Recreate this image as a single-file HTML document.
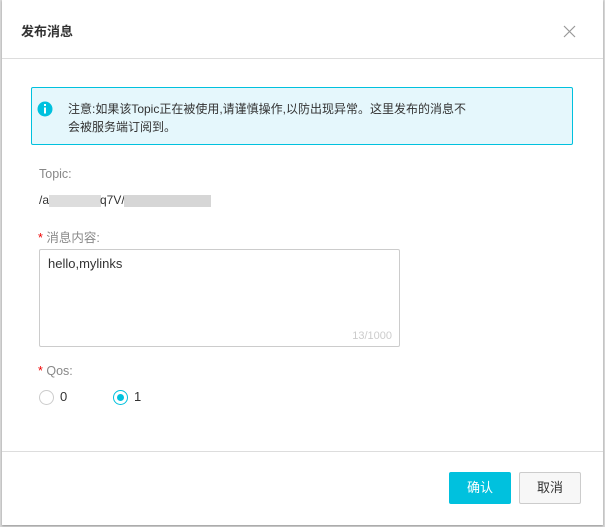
<!DOCTYPE html>
<html><head><meta charset="utf-8"><style>
*{margin:0;padding:0;box-sizing:border-box}
body{width:605px;height:527px;background:#d9d9d9;font-family:"Liberation Sans","Noto Sans CJK SC",sans-serif;position:relative;overflow:hidden;font-size:12px;color:#333}
.dlg{position:absolute;left:2px;top:0;width:601px;height:525px;background:#fff;box-shadow:0 1px 2px rgba(0,0,0,.3)}
.abs{position:absolute}
</style></head><body>
<div class="dlg">
<div class="abs" style="left:19px;top:21px;font-size:13px;font-weight:bold;color:#333">发布消息</div>
<svg class="abs" style="left:561px;top:25px" width="13" height="13"><path d="M1 1L12 12M12 1L1 12" stroke="#999" stroke-width="1.2"/></svg>
<div class="abs" style="left:0;top:58px;width:601px;height:1px;background:#ddd"></div>
<div class="abs" style="left:29px;top:87px;width:542px;height:58px;background:#e5f7fc;border:1px solid #00c1de;border-radius:2px"></div>
<svg class="abs" style="left:35px;top:101px" width="16" height="16"><circle cx="8" cy="8" r="7.5" fill="#00c1de"/><rect x="7" y="3" width="2" height="2" fill="#fff"/><rect x="7" y="6.5" width="2" height="6" fill="#fff"/></svg>
<div class="abs" style="left:66px;top:100px;width:500px;line-height:18px;font-size:12px;color:#333">注意:如果该Topic正在被使用,请谨慎操作,以防出现异常。这里发布的消息不<br>会被服务端订阅到。</div>
<div class="abs" style="left:37px;top:167px;color:#888;font-size:12.5px">Topic:</div>
<div class="abs" style="left:37px;top:193px;color:#333">/a</div>
<div class="abs" style="left:47px;top:195px;width:52px;height:12px;background:#ddd"></div>
<div class="abs" style="left:98px;top:193px;color:#333">q7V/</div>
<div class="abs" style="left:122px;top:195px;width:87px;height:12px;background:#d6d6d6"></div>
<div class="abs" style="left:36px;top:227px;color:#888;font-size:12.5px"><span style="color:#e00">*</span> 消息内容:</div>
<div class="abs" style="left:37px;top:249px;width:361px;height:98px;border:1px solid #ccc;border-radius:2px"></div>
<div class="abs" style="left:46px;top:256px;color:#333;font-size:13px">hello,mylinks</div>
<div class="abs" style="left:298px;top:330px;width:92px;text-align:right;font-size:11px;color:#ccc">13/1000</div>
<div class="abs" style="left:36px;top:364px;color:#888;font-size:12.5px"><span style="color:#e00">*</span> Qos:</div>
<div class="abs" style="left:37px;top:390px;width:15px;height:15px;border:1px solid #ccc;border-radius:50%"></div>
<div class="abs" style="left:58px;top:389px;font-size:13px">0</div>
<div class="abs" style="left:111px;top:390px;width:15px;height:15px;border:1px solid #00c1de;border-radius:50%"><div style="margin:3px;width:7px;height:7px;border-radius:50%;background:#00c1de"></div></div>
<div class="abs" style="left:132px;top:389px;font-size:13px">1</div>
<div class="abs" style="left:0;top:451px;width:601px;height:1px;background:#ddd"></div>
<div class="abs" style="left:447px;top:472px;width:62px;height:32px;background:#00c1de;color:#fff;text-align:center;line-height:32px;border-radius:2px;font-size:13px">确认</div>
<div class="abs" style="left:517px;top:472px;width:62px;height:32px;background:#f7f7f7;border:1px solid #ccc;color:#333;text-align:center;line-height:30px;border-radius:2px;font-size:13px">取消</div>
</div>
</body></html>
